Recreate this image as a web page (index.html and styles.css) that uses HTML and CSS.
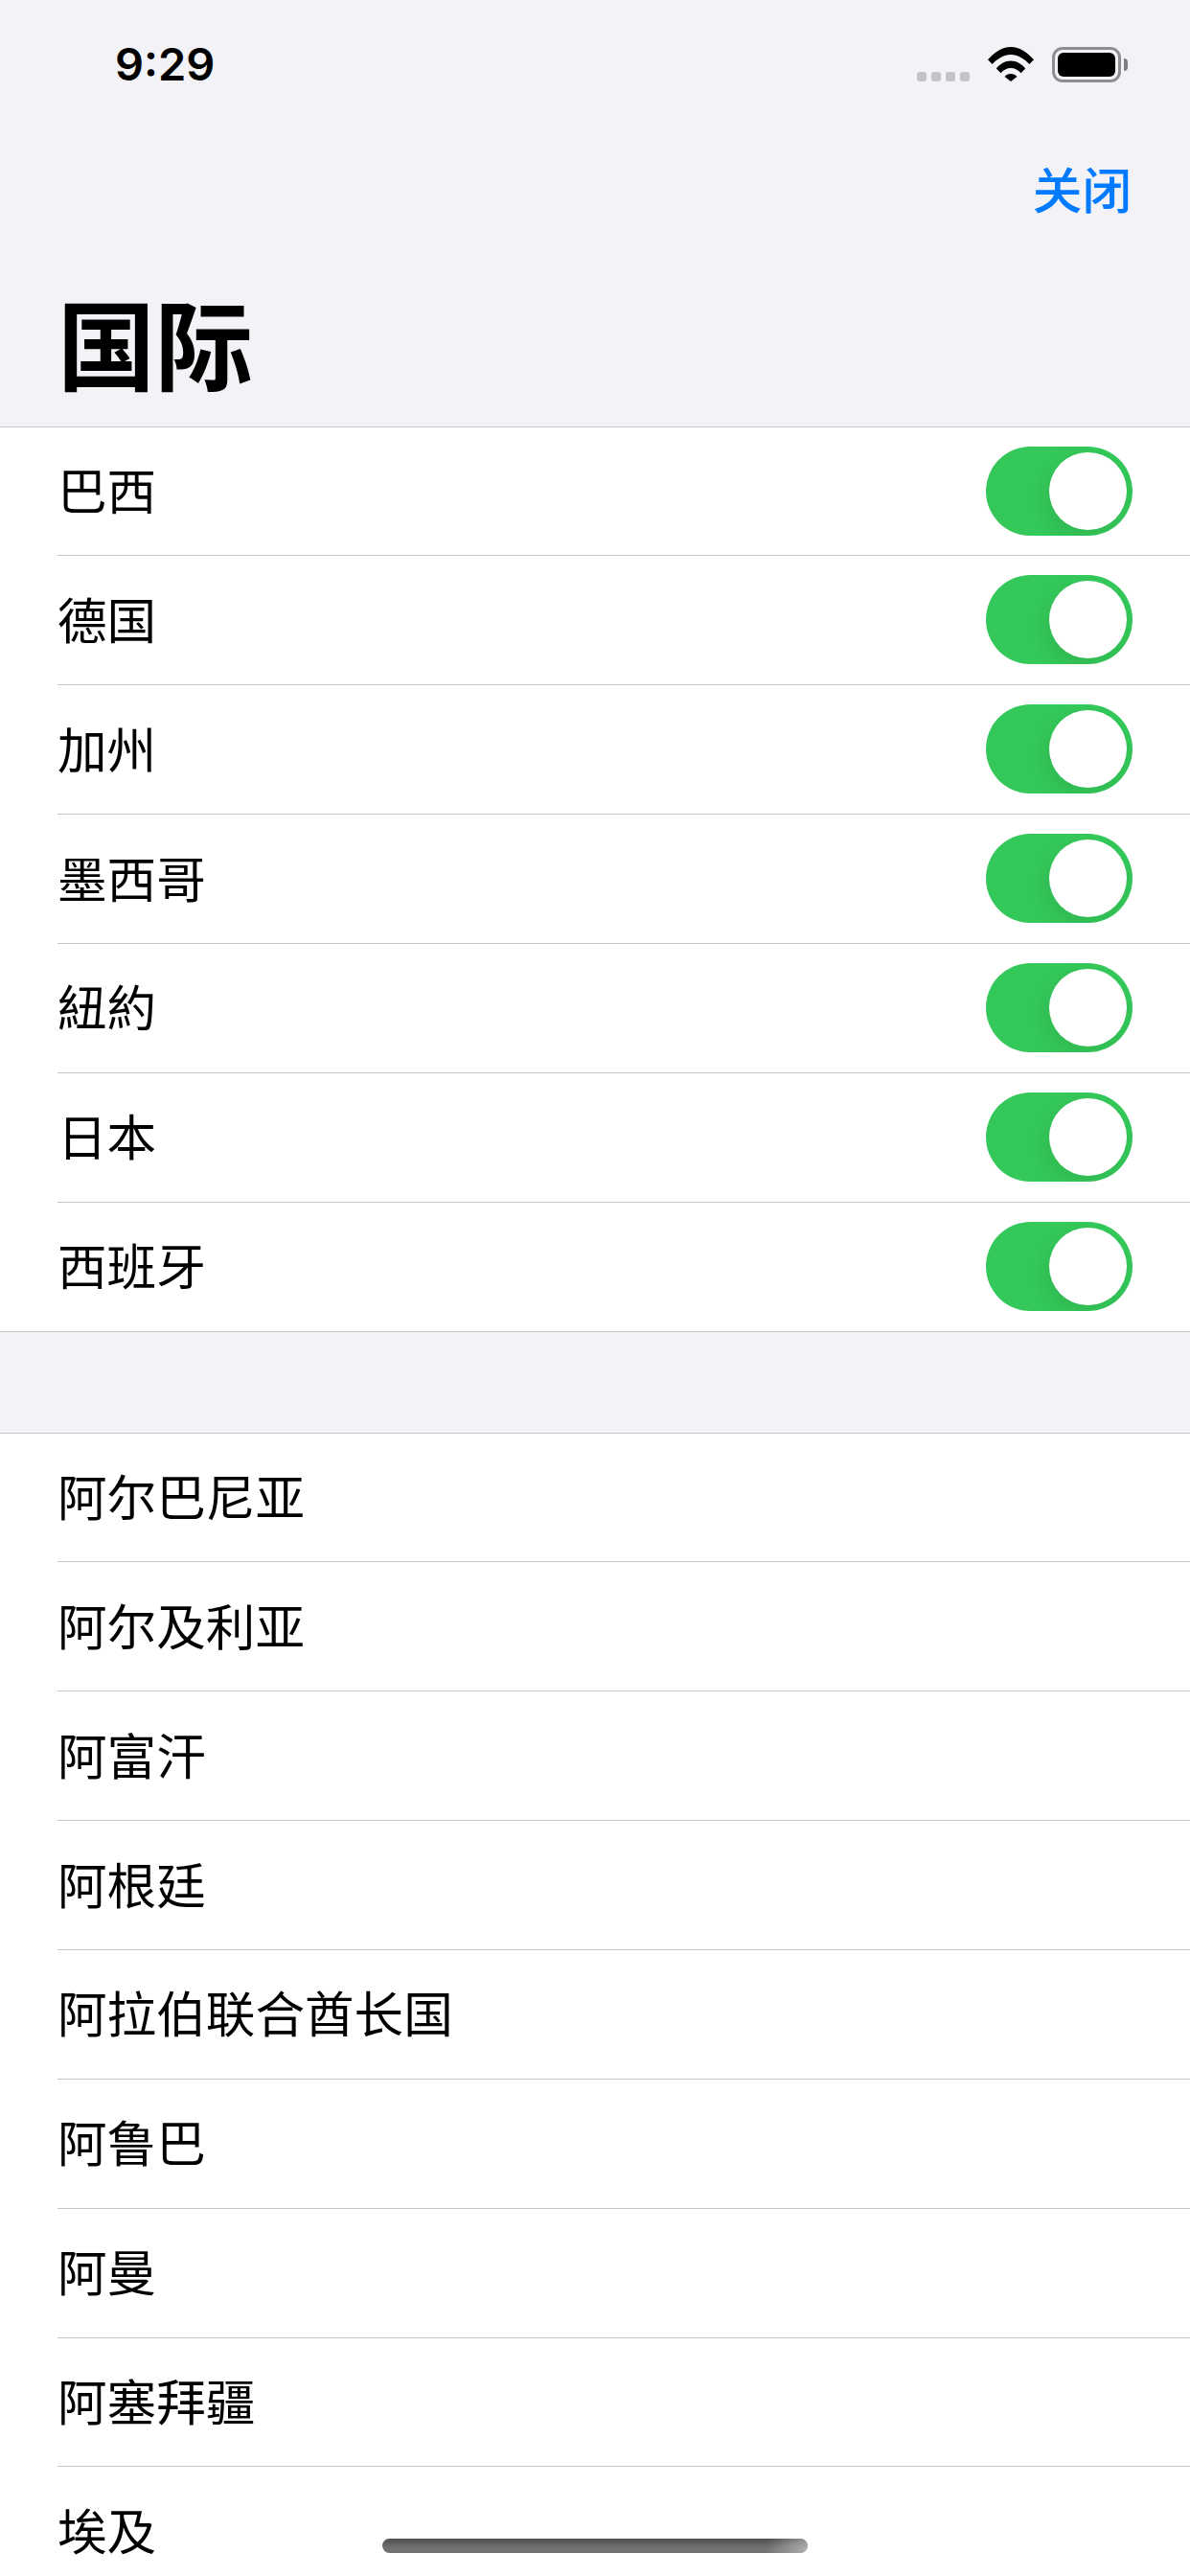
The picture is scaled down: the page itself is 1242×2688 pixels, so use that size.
FILE: index.html
```html
<!DOCTYPE html>
<html lang="zh-Hans">
<head>
<meta charset="utf-8">
<title>国际</title>
<link rel="stylesheet" href="styles.css">
</head>
<body>
<div class="screen">
  <header class="status">
    <span class="time">9:29</span>
    <div class="indicators">
      <div class="signal"><i></i><i></i><i></i><i></i></div>
      <svg class="wifi" viewBox="0 0 48 36" width="48" height="36"><path d="M0 13.2C6.2 6.3 14.6 0 24 0s17.800 6.300 24 13.200l-4.600 4.800C38.200 12.500 31.500 8 24 8S9.800 12.500 4.600 18z"/><path d="M8.800 22.500C12.500 18 18 14.500 24 14.500s11.500 3.500 15.200 8l-4.700 4.800C31.800 24 28 22 24 22s-7.800 2-10.500 5.300z"/><path d="M17.500 31C19 29 21.500 28 24 28s5 1 6.500 3L24 36z"/></svg>
      <div class="battery"><div class="battery-fill"></div></div>
    </div>
  </header>
  <nav class="nav"><a class="close">关闭</a></nav>
  <h1 class="title">国际</h1>
  <section class="group">
    <div class="row"><span class="label">巴西</span><div class="switch"><div class="knob"></div></div></div>
    <div class="row"><span class="label">德国</span><div class="switch"><div class="knob"></div></div></div>
    <div class="row"><span class="label">加州</span><div class="switch"><div class="knob"></div></div></div>
    <div class="row"><span class="label">墨西哥</span><div class="switch"><div class="knob"></div></div></div>
    <div class="row"><span class="label">紐約</span><div class="switch"><div class="knob"></div></div></div>
    <div class="row"><span class="label">日本</span><div class="switch"><div class="knob"></div></div></div>
    <div class="row"><span class="label">西班牙</span><div class="switch"><div class="knob"></div></div></div>
  </section>
  <section class="group second">
    <div class="row"><span class="label">阿尔巴尼亚</span></div>
    <div class="row"><span class="label">阿尔及利亚</span></div>
    <div class="row"><span class="label">阿富汗</span></div>
    <div class="row"><span class="label">阿根廷</span></div>
    <div class="row"><span class="label">阿拉伯联合酋长国</span></div>
    <div class="row"><span class="label">阿鲁巴</span></div>
    <div class="row"><span class="label">阿曼</span></div>
    <div class="row"><span class="label">阿塞拜疆</span></div>
    <div class="row"><span class="label">埃及</span></div>
  </section>
  <div class="home"></div>
</div>
</body>
</html>
```
FILE: styles.css
```css
* { box-sizing: border-box; margin: 0; padding: 0; }
html, body { width: 1242px; height: 2688px; overflow: hidden; }
body { font-family: "Noto Sans CJK SC", "Noto Sans", sans-serif; background: #f2f2f7; color: #000; }
.screen { position: relative; width: 1242px; height: 2688px; overflow: hidden; background: #f2f2f7; }

.status { height: 132px; display: flex; justify-content: space-between; align-items: flex-start; padding: 37px 58px 0 120px; }
.time { font-family: Inter, "Liberation Sans", sans-serif; font-weight: 600; font-size: 47px; line-height: 60px; }
.indicators { display: flex; align-items: flex-start; padding-top: 12px; }
.signal { display: flex; gap: 5px; margin-top: 26px; margin-right: 19px; }
.signal i { display: block; width: 10px; height: 10px; border-radius: 3px; background: #c4c4c8; }
.wifi { display: block; fill: #000; margin-right: 19px; }
.battery { position: relative; width: 72px; height: 37px; border: 3px solid #8e8e92; border-radius: 11px; padding: 3px; margin-right: 14px; }
.battery::after { content: ""; position: absolute; left: 72px; top: 9px; width: 4px; height: 13px; background: #7e7e82; border-radius: 0 4px 4px 0; }
.battery-fill { width: 100%; height: 100%; background: #000; border-radius: 6px; }

.nav { height: 100px; display: flex; justify-content: flex-end; align-items: flex-start; padding: 31px 61px 0 0; }
.close { font-size: 51.6px; font-weight: 500; line-height: 66px; color: #007aff; }
.title { height: 212.6px; padding: 59px 0 0 60px; font-size: 102px; font-weight: 700; line-height: 130px; }

.group { position: relative; background: #fff; }
.group::before, .group::after { content: ""; position: absolute; left: 0; right: 0; height: 1px; background: #c6c6c8; z-index: 1; }
.group::before { top: 0; }
.group::after { bottom: -1px; }
.second { margin-top: 105.98px; }
.row { position: relative; height: 134.86px; display: flex; align-items: center; justify-content: space-between; padding: 0 60px 0 60px; font-size: 51.6px; line-height: 66px; }
.row + .row::before { content: ""; position: absolute; left: 60px; right: 0; top: 0; height: 1px; background: #c6c6c8; }
.label { padding-bottom: 4px; }
.switch { width: 153px; height: 93px; border-radius: 47px; background: #34c759; padding: 6px; display: flex; justify-content: flex-end; overflow: hidden; }
.knob { width: 81px; height: 81px; border-radius: 50%; background: #fff; box-shadow: -4px 8px 18px rgba(0, 0, 0, 0.07); }

.home { position: absolute; left: 399px; top: 2649px; width: 444px; height: 15px; border-radius: 8px; background: linear-gradient(180deg, #4f4f4f 0%, #707070 60%, #707070 100%); }
.home::after { content: ""; position: absolute; inset: 0; border-radius: 8px; background: linear-gradient(110deg, transparent 90%, rgba(255, 255, 255, 0.45) 100%); }
```
